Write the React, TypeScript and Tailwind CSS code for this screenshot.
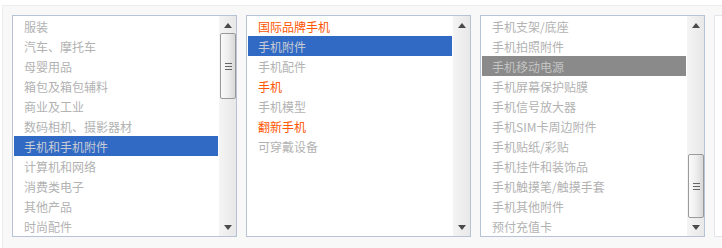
type Item = { label: string; tone?: "hot" | "sel" | "dim" };

const col1: Item[] = [
  { label: "服装" },
  { label: "汽车、摩托车" },
  { label: "母婴用品" },
  { label: "箱包及箱包辅料" },
  { label: "商业及工业" },
  { label: "数码相机、摄影器材" },
  { label: "手机和手机附件", tone: "sel" },
  { label: "计算机和网络" },
  { label: "消费类电子" },
  { label: "其他产品" },
  { label: "时尚配件" },
];

const col2: Item[] = [
  { label: "国际品牌手机", tone: "hot" },
  { label: "手机附件", tone: "sel" },
  { label: "手机配件" },
  { label: "手机", tone: "hot" },
  { label: "手机模型" },
  { label: "翻新手机", tone: "hot" },
  { label: "可穿戴设备" },
];

const col3: Item[] = [
  { label: "手机支架/底座" },
  { label: "手机拍照附件" },
  { label: "手机移动电源", tone: "dim" },
  { label: "手机屏幕保护贴膜" },
  { label: "手机信号放大器" },
  { label: "手机SIM卡周边附件" },
  { label: "手机贴纸/彩贴" },
  { label: "手机挂件和装饰品" },
  { label: "手机触摸笔/触摸手套" },
  { label: "手机其他附件" },
  { label: "预付充值卡" },
];

function Row({ item }: { item: Item }) {
  if (item.tone === "sel") {
    return <div className="h-[20px] leading-[21px] pl-[10px] bg-[#316ac5] text-[#c8ccd4]">{item.label}</div>;
  }
  if (item.tone === "dim") {
    return <div className="h-[20px] leading-[21px] pl-[10px] bg-[#8a8a8a] text-[#c4c4c4]">{item.label}</div>;
  }
  if (item.tone === "hot") {
    return <div className="h-[20px] leading-[21px] pl-[10px] text-[#ff5500]">{item.label}</div>;
  }
  return <div className="h-[20px] leading-[21px] pl-[10px] text-[#b2b2b2]">{item.label}</div>;
}

function Scrollbar({ thumb }: { thumb?: { top: number; height: number } }) {
  return (
    <div className="relative w-[17px] shrink-0 bg-gradient-to-r from-[#f4f4f4] to-[#e8e8e8]">
      {/* up arrow */}
      <svg className="absolute left-[5px] top-[7px]" width="8" height="5" viewBox="0 0 8 5">
        <path d="M4 0 L8 5 L0 5 Z" fill="#4a4a4a" />
      </svg>
      {thumb && (
        <div
          className="absolute left-[1px] right-0 rounded-[2px] border border-[#9a9a9a] bg-gradient-to-r from-[#fafafa] via-[#eeeeee] to-[#d8d8d8] flex flex-col items-center justify-center gap-[2px]"
          style={{ top: thumb.top, height: thumb.height }}
        >
          <div className="w-[7px] h-px bg-[#666]" />
          <div className="w-[7px] h-px bg-[#666]" />
          <div className="w-[7px] h-px bg-[#666]" />
        </div>
      )}
      {/* down arrow */}
      <svg className="absolute left-[5px] bottom-[6px]" width="8" height="5" viewBox="0 0 8 5">
        <path d="M0 0 L8 0 L4 5 Z" fill="#4a4a4a" />
      </svg>
    </div>
  );
}

function ListBox({ items, thumb }: { items: Item[]; thumb?: { top: number; height: number } }) {
  return (
    <div className="w-[225px] h-[222px] shrink-0 border border-[#b5c3d5] bg-white flex overflow-hidden">
      <div className="flex-1 px-[1px] overflow-hidden">
        {items.map((it) => (
          <Row key={it.label} item={it} />
        ))}
      </div>
      <Scrollbar thumb={thumb} />
    </div>
  );
}

export default function App() {
  return (
    <div
      className="w-[722px] h-[248px] bg-white overflow-hidden text-[12px]"
      style={{ fontFamily: '"SimSun", "Noto Sans CJK SC", sans-serif' }}
    >
      <div className="mt-[5px] ml-[2px] h-[243px] border-t border-l border-[#ededed] bg-[#f8f8f8] pt-[9px] pl-[9px] flex gap-[9px]">
        <ListBox items={col1} thumb={{ top: 17, height: 66 }} />
        <ListBox items={col2} />
        <ListBox items={col3} thumb={{ top: 138, height: 64 }} />
        <div className="w-[20px] h-[222px] shrink-0 border border-[#e2e6ea] bg-white" />
      </div>
    </div>
  );
}
